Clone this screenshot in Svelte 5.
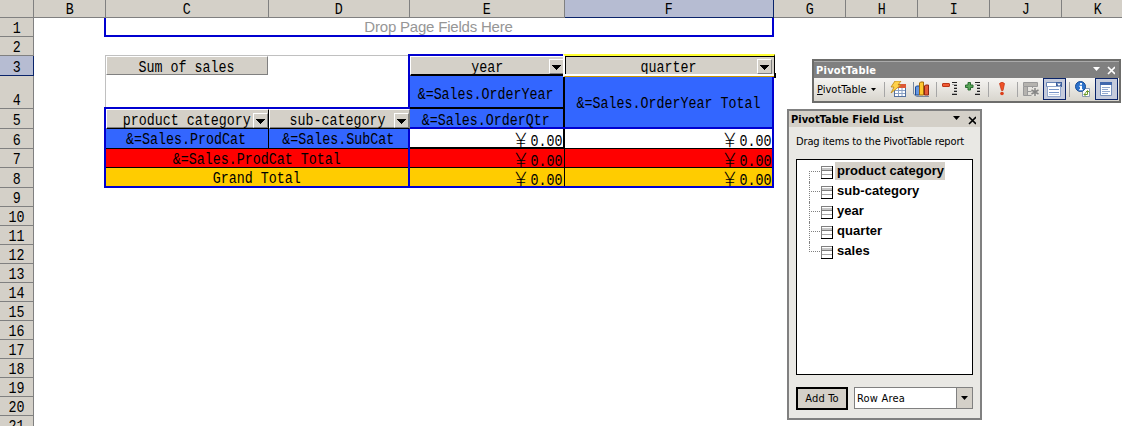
<script>
  const columns = ['B', 'C', 'D', 'E', 'F', 'G', 'H', 'I', 'J', 'K'];
  const rows = Array.from({ length: 21 }, (_, i) => i + 1);
  const totals = [
    { row: 6, tone: 'plain' },
    { row: 7, tone: 'red' },
    { row: 8, tone: 'gold' }
  ];
  const fields = ['product category', 'sub-category', 'year', 'quarter', 'sales'];
</script>

{#snippet arrow()}
  <span class="drop"><svg width="9" height="5" viewBox="0 0 9 5" shape-rendering="crispEdges"><path d="M0 0h9v1H8v1H7v1H6v1H5v1H4V4H3V3H2V2H1V1H0z" /></svg></span>
{/snippet}

{#snippet lines()}
  <path d="M10 1.500h5M12 4.500h3M12 7.500h3M12 10.500h3M10 13.500h5" stroke="#222" />
  <path d="M10 3.500h5M12 6.500h3M12 9.500h3M10 12.500h5" stroke="#aaa" />
{/snippet}

<main>
  <div class="sheet">
    <div class="head corner"></div>
    {#each columns as c}
      <div class="head col" class:sel={c === 'F'}><span class="t">{c}</span></div>
    {/each}
    {#each rows as r}
      <div class="head row" class:sel={r === 3} style="grid-row:{r + 1}"><span class="t">{r}</span></div>
    {/each}

    <div class="hint">Drop Page Fields Here</div>
    <div class="void"></div>
    <div class="field sum"><span class="t">Sum of sales</span></div>
    <div class="field year"><span class="t">year</span>{@render arrow()}</div>
    <div class="field quarter"><span class="t">quarter</span>{@render arrow()}</div>
    <div class="cell blue oy"><span class="t">&amp;=Sales.OrderYear</span></div>
    <div class="cell blue oq"><span class="t">&amp;=Sales.OrderQtr</span></div>
    <div class="cell blue oyt"><span class="t">&amp;=Sales.OrderYear Total</span></div>
    <div class="field prod"><span class="t">product category</span>{@render arrow()}</div>
    <div class="field sub"><span class="t">sub-category</span>{@render arrow()}</div>
    <div class="cell blue pc"><span class="t">&amp;=Sales.ProdCat</span></div>
    <div class="cell blue sc"><span class="t">&amp;=Sales.SubCat</span></div>
    <div class="cell red pct"><span class="t">&amp;=Sales.ProdCat Total</span></div>
    <div class="cell gold gt"><span class="t">Grand Total</span></div>
    {#each totals as n}
      <div class="cell num e {n.tone}" style="grid-row:{n.row + 1}"><span class="t"><i>￥</i>0.00</span></div>
      <div class="cell num f {n.tone}" style="grid-row:{n.row + 1}"><span class="t"><i>￥</i>0.00</span></div>
    {/each}

    <div class="frame page"></div>
    <div class="frame colarea"></div>
    <div class="frame rowarea"></div>
    <div class="frame dataarea"></div>
    <div class="cursor"><b></b></div>
  </div>

  <section class="toolbar">
    <header>
      <span class="w1">PivotTable</span>
      <svg width="22" height="9" viewBox="0 0 22 9"><path d="M0 1h7L3.500 5z" fill="#fff" /><path d="M15 1l7 7M22 1l-7 7" stroke="#fff" stroke-width="1.700" /></svg>
    </header>
    <div class="tools">
      <div class="menu"><span><u>P</u>ivotTable</span><svg width="5" height="3" viewBox="0 0 5 3"><path d="M0 0h5L2.500 3z" /></svg></div>
      <hr />
      <div class="btn">
        <svg width="16" height="16" viewBox="0 0 16 16">
          <rect x="4.500" y="3.500" width="11" height="12" fill="#fff" stroke="#53709f" />
          <rect x="5" y="3" width="11" height="4" fill="#dc5936" />
          <path d="M5 9.500h10M5 12.500h10M8.500 7v8M12 7v8" stroke="#8aa1c5" />
          <path d="M5 0h6L8 4h3L1 12l3-6H1z" fill="#ffd24a" stroke="#b88310" stroke-width=".8" />
        </svg>
      </div>
      <div class="btn">
        <svg width="16" height="16" viewBox="0 0 16 16">
          <path d="M.5 1v12l3 2.500H16" fill="none" stroke="#7888a0" />
          <path d="M2.500 6l1-1h3v9h-4z" fill="#6695e0" stroke="#174b99" />
          <path d="M6.500 2l1-1h3v13h-4z" fill="#ffc931" stroke="#a66b07" />
          <path d="M11.500 5l1-1h3v10h-4z" fill="#e65c38" stroke="#8e2616" />
        </svg>
      </div>
      <hr />
      <div class="btn">
        <svg width="16" height="16" viewBox="0 0 16 16"><rect x=".5" y="2.500" width="7" height="3" rx=".5" fill="#ef5b35" stroke="#bb3518" />{@render lines()}</svg>
      </div>
      <div class="btn">
        <svg width="16" height="16" viewBox="0 0 16 16"><path d="M3 1.500h2.500V4H8v2.500H5.500V9H3V6.500H.5V4H3z" fill="#57a657" stroke="#2c6d32" />{@render lines()}</svg>
      </div>
      <hr />
      <div class="btn">
        <svg width="16" height="16" viewBox="0 0 16 16"><path d="M5.500 2.500Q8 0 10.500 2.500L9 9.500H7.500z" fill="#ef5227" stroke="#c02f12" stroke-width=".7" /><circle cx="8" cy="12.500" r="1.800" fill="#dc3e1a" /></svg>
      </div>
      <hr />
      <div class="btn">
        <svg width="16" height="16" viewBox="0 0 16 16" fill="none" stroke="#999"><path d="M.5 1.500h14v4H.5zM.5 5.500v9h8M.5 10.500h8M4.500 1.500v13M9.500 1.500v6" /><path d="M1 2h13v3H1zM1 6h3v8H1z" fill="#b5b3af" stroke="none" /><path d="M9 7h7v8H9z" fill="#e6e4df" stroke="none" /><path d="M12 7v8M8.500 9l7 4M15.500 9l-7 4" stroke="#858585" stroke-width="1.500" /></svg>
      </div>
      <div class="btn on">
        <svg width="16" height="16" viewBox="0 0 16 16"><path d="M.5 1.500h15v4H.5z" fill="#fff" stroke="#6683b5" /><path d="M10 1h6v5h-6z" fill="#3c5f9d" /><path d="M11 2.500h4L13 5z" fill="#fff" /><path d="M1.500 5.500h13v10h-13z" fill="#fff" stroke="#91a6cb" /><path d="M3 8.500h10M3 11.500h10" stroke="#7896c8" /><path d="M3 13.500h10" stroke="#c4d0e5" /></svg>
      </div>
      <hr />
      <div class="btn">
        <svg width="16" height="16" viewBox="0 0 16 16"><path d="M7.500 7.500h7v8h-7z" fill="#fff" stroke="#8a9bb8" /><path d="M9 13.500h3.500V10M9 13.500l2-2M9 13.500l2 2M12.500 9.500l-2 2M12.500 9.500l2 2" fill="none" stroke="#6c9a28" /><circle cx="5.500" cy="5.500" r="5" fill="#2d72cb" stroke="#174a94" /><path d="M5 2h2v1.800H5zM4.200 4.700H7v3.600h1v1H4v-1h1V5.700h-.8z" fill="#fff" /></svg>
      </div>
      <div class="btn on">
        <svg width="16" height="16" viewBox="0 0 16 16"><path d="M2.500 1.500h11v13h-11z" fill="#fff" stroke="#7892be" /><path d="M2 1h12v3H2z" fill="#4168ad" /><path d="M4 6.500h8M4 8.500h6M4 10.500h8M4 12.500h6" stroke="#91a8cf" /></svg>
      </div>
    </div>
  </section>

  <section class="list">
    <header>
      <span class="w2">PivotTable Field List</span>
      <svg width="23" height="9" viewBox="0 0 23 9"><path d="M0 0h7L3.500 4z" /><path d="M16 1l7 7M23 1l-7 7" stroke="#000" stroke-width="1.600" /></svg>
    </header>
    <p><span class="w3">Drag items to the PivotTable report</span></p>
    <ul>
      {#each fields as f, i}
        <li>
          <span class="stem" class:first={i === 0} class:last={i === 4}></span>
          <svg width="12" height="13" viewBox="0 0 12 13" shape-rendering="crispEdges"><path d="M0 0h12v13H0z" fill="#fff" /><path d="M1 2h10v2H1z" fill="#c5c5c5" /><path d="M1 8.500h10" stroke="#aaa" /><path d="M.5 13V.5H12M1 4.500h10" fill="none" stroke="#808080" /><path d="M11.500 0v12.500H0" fill="none" stroke="#000" /></svg>
          <span class="name" class:hl={i === 0}>{f}</span>
        </li>
      {/each}
    </ul>
    <footer>
      <button><span>Add To</span></button>
      <div class="combo"><span>Row Area</span><b><svg width="7" height="4" viewBox="0 0 7 4"><path d="M0 0h7L3.500 4z" /></svg></b></div>
    </footer>
  </section>
</main>

<style>
  :global(body) { background: #fff; overflow: hidden; }
  * { box-sizing: border-box; }
  main { position: relative; width: 1122px; height: 426px; overflow: hidden; color: #000; }
  .sheet {
    display: grid;
    grid-template-columns: 34px 72px 163px 141px 155px 209px 72px 72px 72px 72px 72px;
    grid-template-rows: 18px 19px 19px 20px 33px 20px 20px 19px 20px repeat(13, 19px);
    font-family: "Liberation Mono", "Noto Sans CJK SC", monospace;
    font-size: 16px;
    line-height: 18px;
    width: 1194px;
  }
  .t { display: inline-block; flex: none; transform: translateX(-1px) scaleX(.833); white-space: pre; }
  .head { background: #d4d0c8; border-right: 1px solid #808080; border-bottom: 1px solid #808080; display: flex; justify-content: center; align-items: flex-end; }
  .corner { grid-area: 1 / 1; }
  .col { grid-row: 1; }
  .row { grid-column: 1; }
  .row .t { transform: translateY(2px) scaleX(.833); }
  .col .t { transform: translateY(2px) scaleX(.833); }
  .head.sel { background: #b6bcd2; border-color: #0a246a; }
  .cell, .field { display: flex; justify-content: center; align-items: center; min-width: 0; }
  .hint { grid-area: 2 / 3 / 3 / 7; text-align: center; font: 15px/17px "Liberation Sans", sans-serif; color: #969696; padding-right: 3px; letter-spacing: -.2px; }
  .void { grid-area: 4 / 3 / 6 / 5; margin: -1px 0 0 -1px; border: solid #c0c0c0; border-width: 1px 0 0 1px; }
  .field { background: #d4d0c8; border: 1px solid; border-color: #fff #808080 #808080 #fff; position: relative; padding-top: 4px; }
  .sum { grid-area: 4 / 3; margin: 0 1px 1px 0; }
  .sum .t { transform: scaleX(.833); }
  .year { grid-area: 4 / 5; border-right: 0; border-bottom: 2px solid #000; }
  .quarter { grid-area: 4 / 6; border: 0; }
  .prod { grid-area: 6 / 3; border-right-color: #000; box-shadow: inset 0 -1px #808080; border-bottom-color: #000; }
  .sub { grid-area: 6 / 4; border-bottom-color: #000; box-shadow: inset 0 -1px #808080; }
  .sub .t { transform: translateX(-2px) scaleX(.833); }
  .drop { position: absolute; right: 1px; bottom: 1px; width: 15px; height: 15px; background: #d4d0c8; border: 1px solid; border-color: #fff #808080 #808080 #fff; display: flex; align-items: center; justify-content: center; padding-top: 2px; }
  .prod .drop, .sub .drop { bottom: 0; right: 0; }
  .year .drop { bottom: 0; }
  .quarter .drop { bottom: 2px; right: 2px; }
  .blue { background: #36f; }
  .red { background: #f00; }
  .gold { background: #fc0; }
  .cell { border-right: 1px solid #000; border-bottom: 1px solid #000; padding-top: 3px; }
  .oy { grid-area: 5 / 5; border-width: 0 2px 2px 0; padding-top: 6px; }
  .oq { grid-area: 6 / 5; border-right-width: 2px; padding-top: 4px; }
  .oyt { grid-area: 5 / 6 / 7 / 7; }
  .pc { grid-area: 7 / 3; }
  .sc { grid-area: 7 / 4; }
  .pct { grid-area: 8 / 3 / 9 / 5; }
  .gt { grid-area: 9 / 3 / 10 / 5; }
  .num { justify-content: flex-end; padding-right: 1px; line-height: 16px; }
  .num .t { transform-origin: right; height: 16px; }
  .num i { display: inline-block; width: 19px; height: 14px; font: normal 300 19px/14px "Noto Sans CJK SC", sans-serif; vertical-align: -1px; transform: translateX(-2px) scaleX(1.150); }
  .e { grid-column: 5; }
  .e.plain { border-width: 0 2px 2px 0; padding-right: 0; }
  .f { grid-column: 6; }
  .frame { border: 2px solid #0000d0; margin: -2px 0 0 -2px; }
  .page { grid-area: 2 / 3 / 3 / 7; border-top: 0; margin-top: 0; }
  .colarea { grid-area: 4 / 5 / 7 / 7; }
  .rowarea { grid-area: 6 / 3 / 10 / 5; }
  .dataarea { grid-area: 7 / 5 / 10 / 7; }
  .cursor { grid-area: 4 / 6; position: relative; margin: -2px -1px -1px -2px; border: solid; border-width: 2px 1px 1px 2px; border-color: #ff3 #000 #c90 #fff; box-shadow: inset 0 -2px #fff, inset 1px 1px #000; }
  .cursor b { position: absolute; right: -2px; bottom: -2px; width: 2px; height: 5px; background: #000; }

  .toolbar, .list { position: absolute; font: 11px/14px "DejaVu Sans Condensed", "DejaVu Sans", sans-serif; }
  .toolbar { left: 812px; top: 59px; width: 309px; height: 44px; border: 2px solid #6d6d6b; }
  header { display: flex; justify-content: space-between; align-items: center; font-weight: bold; height: 17px; }
  header span, p span, .menu span, footer span { white-space: nowrap; }
  .w1 { letter-spacing: .25px; }
  .w3 { letter-spacing: -.15px; }
  .toolbar header { background: #808080; color: #fff; padding: 1px 4px 0 2px; border-top: 1px solid #aaa; }
  .tools { display: flex; height: 23px; background: linear-gradient(#f5f4f2, #d8d5cd); }
  .menu { width: 70px; display: flex; align-items: center; gap: 4px; padding-left: 3px; }
  hr { width: 1px; height: 15px; margin: 4px 2px 0 3px; border: 0; background: #a6a6a6; flex: none; }
  .menu + hr { margin-left: 0; }
  .btn { width: 23px; height: 22px; padding: 3px; flex: none; }
  .btn svg { display: block; }
  .on { border: 1px solid #0a246a; background: #c5cbdb; padding: 2px; }

  .list { left: 787px; top: 109px; width: 195px; height: 311px; background: #e9e8e4; border: 2px solid #808080; }
  .list header { background: #d4d0c8; height: 16px; padding: 2px 4px 0 2px; }
  p { margin: 0; padding: 8px 0 0 7px; height: 32px; }
  ul { list-style: none; margin: 0 0 0 7px; padding: 2px 0 0 12px; width: 177px; height: 216px; background: #fff; border: 1px solid #000; }
  li { display: flex; height: 20px; align-items: flex-start; }
  li svg { margin: 4px 2px 0 0; }
  .stem { width: 12px; height: 20px; border-left: 1px dotted #808080; background: repeating-linear-gradient(90deg, #808080 0 1px, #fff 1px 2px) 1px 9px / 9px 1px no-repeat; }
  .first { height: 11px; margin-top: 9px; background-position: 1px 0; }
  .last { height: 10px; }
  .name { font: bold 13px/17px "Liberation Sans", sans-serif; letter-spacing: .06px; padding: 0 1px 0 2px; height: 18px; }
  .hl { background: #d4d0c8; }
  footer { display: flex; gap: 6px; padding: 12px 0 0 7px; }
  button { font: inherit; width: 52px; height: 23px; padding: 1px 0 0; color: #000; background: #d4d0c8; border: 2px solid #000; border-radius: 0; letter-spacing: .2px; }
  .combo { width: 119px; height: 22px; background: #fff; border: 1px solid #808080; display: flex; justify-content: space-between; line-height: 21px; padding-left: 2px; letter-spacing: .2px; }
  .combo b { width: 16px; background: #d4d0c8; border-left: 1px solid #808080; display: flex; align-items: center; justify-content: center; }
</style>
